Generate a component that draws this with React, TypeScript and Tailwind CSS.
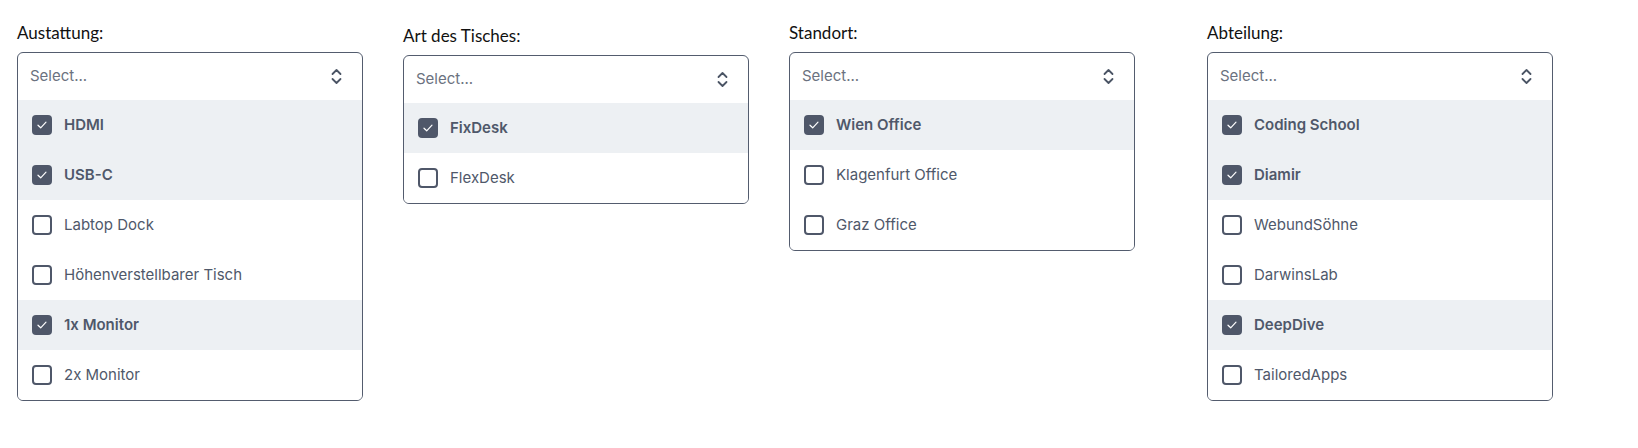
import React from "react";

type Option = { label: string; checked?: boolean };

interface MultiSelectProps {
  label: string;
  options: Option[];
  className?: string;
}

function ChevronsIcon() {
  return (
    <svg width="11" height="17" viewBox="0 0 11 17" fill="none" className="shrink-0">
      <path d="M1.5 6 5.5 2l4 4" stroke="#4b5565" strokeWidth="1.8" strokeLinecap="round" strokeLinejoin="round" />
      <path d="M1.5 11 5.5 15l4-4" stroke="#4b5565" strokeWidth="1.8" strokeLinecap="round" strokeLinejoin="round" />
    </svg>
  );
}

function Checkbox({ checked }: { checked?: boolean }) {
  if (checked) {
    return (
      <span className="flex h-5 w-5 shrink-0 items-center justify-center rounded-[4px] bg-[#4f5769]">
        <svg width="14" height="14" viewBox="0 0 14 14" fill="none">
          <path d="M3 7.2 5.7 9.8 11 4.2" stroke="#ffffff" strokeWidth="1.2" strokeLinecap="round" strokeLinejoin="round" />
        </svg>
      </span>
    );
  }
  return <span className="h-5 w-5 shrink-0 rounded-[4px] border-2 border-[#4f5769] bg-white" />;
}

function MultiSelect({ label, options, className }: MultiSelectProps) {
  return (
    <div className={"flex w-[346px] shrink-0 flex-col " + (className ?? "")}>
      <span className="mb-[9px] font-['Lato',sans-serif] text-[17px] leading-5 font-normal text-[#111111]">
        {label}
      </span>
      <div className="overflow-hidden rounded-md border border-[#535c6e] bg-white">
        {/* trigger */}
        <div className="flex h-[47px] items-center justify-between pl-3 pr-5">
          <span className="text-[15px] text-[#6b7280]">Select...</span>
          <ChevronsIcon />
        </div>
        {/* options */}
        {options.map((o) => (
          <div
            key={o.label}
            className={
              "flex h-[50px] items-center gap-3 px-3.5 " +
              (o.checked ? "bg-[#edf0f3]" : "bg-white")
            }
          >
            <Checkbox checked={o.checked} />
            <span className={"text-[15px] text-[#4f586a] " + (o.checked ? "font-semibold" : "font-normal")}>
              {o.label}
            </span>
          </div>
        ))}
      </div>
    </div>
  );
}

export default function App() {
  return (
    <div className="flex min-h-[448px] w-full items-start bg-white pt-[23px] pl-[17px] font-['Inter',sans-serif]">
      <MultiSelect
        label="Austattung:"
        options={[
          { label: "HDMI", checked: true },
          { label: "USB-C", checked: true },
          { label: "Labtop Dock" },
          { label: "Höhenverstellbarer Tisch" },
          { label: "1x Monitor", checked: true },
          { label: "2x Monitor" },
        ]}
      />
      <MultiSelect
        label="Art des Tisches:"
        className="mt-[3px] ml-10"
        options={[{ label: "FixDesk", checked: true }, { label: "FlexDesk" }]}
      />
      <MultiSelect
        label="Standort:"
        className="ml-10"
        options={[
          { label: "Wien Office", checked: true },
          { label: "Klagenfurt Office" },
          { label: "Graz Office" },
        ]}
      />
      <MultiSelect
        label="Abteilung:"
        className="ml-[72px]"
        options={[
          { label: "Coding School", checked: true },
          { label: "Diamir", checked: true },
          { label: "WebundSöhne" },
          { label: "DarwinsLab" },
          { label: "DeepDive", checked: true },
          { label: "TailoredApps" },
        ]}
      />
    </div>
  );
}
